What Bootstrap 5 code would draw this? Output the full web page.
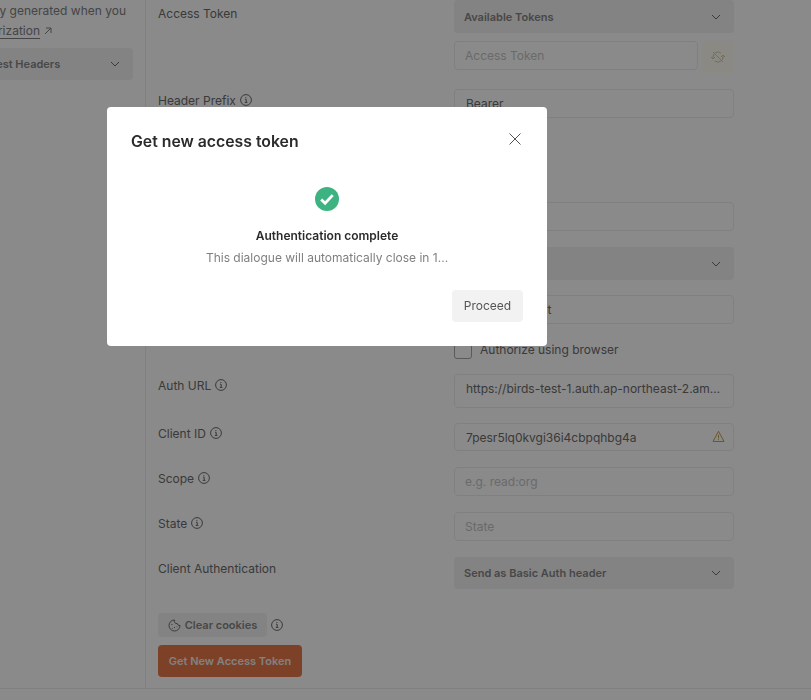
<!DOCTYPE html>
<html lang="en">
<head>
<meta charset="utf-8">
<title>Get new access token</title>
<link href="https://cdn.jsdelivr.net/npm/bootstrap@5.3.0/dist/css/bootstrap.min.css" rel="stylesheet">
<style>
html,body{height:700px;overflow:hidden;background:#fff}
body{font-family:Inter,"Liberation Sans",sans-serif;font-size:12px;line-height:20px;color:#6b6b6b}
.shell{height:689px;border-bottom:1px solid #ededed}
.leftpane{width:146px;border-right:1px solid #ededed;padding-right:12px;overflow:hidden;flex:none}
.cliprow{display:flex;justify-content:flex-end;white-space:nowrap;color:#808080;overflow:hidden;height:20px;padding-top:1px}
.cliprow>*{flex:none}
.leftone{margin-right:7px}
.lefttwo{margin-right:81px;align-items:center;gap:4px}
.lefttwo u{text-underline-offset:3px;text-decoration-thickness:1px}
.selbox{background:#f2f2f2;border-radius:4px;font-weight:600;font-size:11px;color:#858585;display:flex;align-items:center;justify-content:space-between;padding:1px 13px 0 10px;white-space:nowrap}
.selbox svg{flex:none;color:#6b6b6b}
.leftsel{margin-top:8px;height:32px;width:174px;margin-left:-41px;padding-top:0}
.mainpane{padding-left:12px}
.rw{display:flex;width:576px}
.lab{width:296px;flex:none;color:#6b6b6b;display:flex;align-items:flex-start;gap:4px;padding-top:2px}
.lab.lab3{padding-top:4px}
.lab.lab0{padding-top:1px}
.lab svg{margin-top:3px;flex:none}
.ctl{width:280px;flex:none}
.fld{display:block;width:100%;height:29px;border:1px solid #ededed;border-radius:4px;background:#fff;padding:3px 8px 3px 11px;font-size:12px;line-height:21px;color:#6b6b6b;font-family:inherit;white-space:nowrap;overflow:hidden;text-overflow:ellipsis;box-shadow:none}
input.fld{padding-left:10px}
.fld::placeholder{color:#c4c4c4;opacity:1}
.fld.tall{height:34px;padding-top:3px;padding-bottom:7px}
.fld.short{height:28px}
.sel33{height:33px}
.sel32{height:32px;padding-top:0}
.m8{margin-top:8px}.m19{margin-top:19px}.m84{margin-top:84px}.m16{margin-top:16px}.m15{margin-top:15px}.m18{margin-top:18px}
.tokrow{display:flex;gap:4px;height:29px;align-items:flex-start}
.tokrow .fld{width:244px}
.syncbtn{width:32px;height:32px;background:#fffdf2;border-radius:4px;display:flex;align-items:center;justify-content:center;flex:none}
.chk{display:flex;align-items:center;gap:8px;height:16px}
.chkbox{width:18px;height:17px;border:1px solid #a6a6a6;border-radius:3px;background:#fff;flex:none}
.warnwrap{position:relative}
.warnwrap .fld{padding-right:30px}
.warnmark{position:absolute;right:9px;top:7px}
.clearrow{display:flex;align-items:center;gap:4px;margin-top:24px}
.clearbtn{width:109px;height:24px;background:#f2f2f2;border-radius:4px;font-size:11px;font-weight:600;color:#858585;display:flex;align-items:center;justify-content:center;gap:4px;white-space:nowrap}
.getbtn{display:flex;align-items:center;justify-content:center;width:144px;height:32px;margin-top:8px;background:#e8784a;border-radius:4px;font-size:11px;font-weight:600;color:#eee;white-space:nowrap}
.modal-backdrop.show{opacity:.46}
.dlgwrap{width:440px;max-width:none;margin:107px 0 0 107px}
.dlgbox{height:239px;border:0;border-radius:4px;padding:0 24px;color:#2b2b2b;font-size:12px}
.dlghead{height:66px;padding-top:24px;display:flex;justify-content:space-between;align-items:flex-start}
.dlgtitle{font-size:15.8px;font-weight:600;line-height:22px;margin:0;color:#2b2b2b}
.dlgclose{width:14px;height:14px;margin:1px 1px 0 0;padding:0;border:0;background:none;display:flex}
.dlgcheck{display:block;margin:14px auto 0}
.dlgmsg{text-align:center;font-weight:600;margin-top:15px;line-height:20px}
.dlgsub{text-align:center;color:#7f7f7f;margin-top:2px;line-height:20px}
.dlgfoot{display:flex;justify-content:flex-end;margin-top:22px}
.proceedbtn{width:71px;height:32px;background:#f2f2f2;border:0;border-radius:4px;color:#545454;font-size:12px;padding:0}
</style>
</head>
<body>
<svg width="0" height="0" class="d-none">
  <symbol id="ico-info" viewBox="0 0 12 12"><circle cx="6" cy="6" r="5.4" fill="none" stroke="currentColor"/><path d="M5 5.3h1.2v3M4.8 8.4h2.6M5.9 3.1v1" fill="none" stroke="currentColor"/></symbol>
  <symbol id="ico-chev" viewBox="0 0 10 6"><path d="M1 1l4 4 4-4" fill="none" stroke="currentColor"/></symbol>
</svg>
<div class="shell d-flex">
  <aside class="leftpane">
    <div class="cliprow leftone"><span>Tokens are automatically generated when you</span></div>
    <div class="cliprow lefttwo"><u>complete authorization</u><svg width="8" height="8" viewBox="0 0 8 8"><path d="M1 7l6-6M2 1h5v5" fill="none" stroke="#808080"/></svg></div>
    <div class="selbox leftsel"><span>Request Headers</span><svg width="10" height="6"><use href="#ico-chev"/></svg></div>
  </aside>
  <main class="mainpane flex-grow-1">
    <div class="rw">
      <div class="lab lab3"><span>Access Token</span></div>
      <div class="ctl">
        <div class="selbox sel33"><span>Available Tokens</span><svg width="10" height="6"><use href="#ico-chev"/></svg></div>
        <div class="tokrow m8">
          <input class="fld form-control" placeholder="Access Token" aria-label="Access Token">
          <div class="syncbtn"><svg width="16" height="16" viewBox="0 0 16 16" fill="none" stroke="#d5cc9d"><path d="M3 3l10 10M3 10V8a5 5 0 0 1 8-4M13 6v2a5 5 0 0 1-8 4M1 8l2 2 2-2M11 8l2-2 2 2"/></svg></div>
        </div>
      </div>
    </div>
    <div class="rw m19">
      <div class="lab"><span>Header Prefix</span><svg width="12" height="12"><use href="#ico-info"/></svg></div>
      <div class="ctl"><div class="fld">Bearer</div></div>
    </div>
    <div class="rw m84">
      <div class="lab"></div>
      <div class="ctl"><div class="fld"></div></div>
    </div>
    <div class="rw m16">
      <div class="lab"></div>
      <div class="ctl"><div class="selbox sel33"><span></span><svg width="10" height="6"><use href="#ico-chev"/></svg></div></div>
    </div>
    <div class="rw m15">
      <div class="lab"></div>
      <div class="ctl"><div class="fld">http://localhost</div></div>
    </div>
    <div class="rw m18">
      <div class="lab"></div>
      <div class="ctl"><div class="chk"><span class="chkbox"></span><span>Authorize using browser</span></div></div>
    </div>
    <div class="rw m16">
      <div class="lab"><span>Auth URL</span><svg width="12" height="12"><use href="#ico-info"/></svg></div>
      <div class="ctl"><div class="fld tall">https://birds-test-1.auth.ap-northeast-2.amazoncognito.com/login</div></div>
    </div>
    <div class="rw m15">
      <div class="lab lab0"><span>Client ID</span><svg width="12" height="12"><use href="#ico-info"/></svg></div>
      <div class="ctl warnwrap"><div class="fld short">7pesr5lq0kvgi36i4cbpqhbg4a</div>
        <svg class="warnmark" width="13" height="13" viewBox="0 0 13 13" fill="none" stroke="#c9a23f"><path d="M6.5 1.3L12 11.5H1z" stroke-linejoin="round"/><path d="M6.5 4.8v3.6M6.5 9.2v1"/></svg>
      </div>
    </div>
    <div class="rw m16">
      <div class="lab"><span>Scope</span><svg width="12" height="12"><use href="#ico-info"/></svg></div>
      <div class="ctl"><input class="fld form-control" placeholder="e.g. read:org" aria-label="Scope"></div>
    </div>
    <div class="rw m16">
      <div class="lab"><span>State</span><svg width="12" height="12"><use href="#ico-info"/></svg></div>
      <div class="ctl"><input class="fld form-control" placeholder="State" aria-label="State"></div>
    </div>
    <div class="rw m16">
      <div class="lab"><span>Client Authentication</span></div>
      <div class="ctl"><div class="selbox sel32"><span>Send as Basic Auth header</span><svg width="10" height="6"><use href="#ico-chev"/></svg></div></div>
    </div>
    <div class="clearrow">
      <div class="clearbtn"><svg width="13" height="13" viewBox="0 0 13 13" fill="none" stroke="#6b6b6b"><path d="M6.5 1A5.5 5.5 0 1 0 12 6.5 2.4 2.4 0 0 1 9.3 4.6 2.6 2.6 0 0 1 6.5 1z"/><path d="M4 5v1M6.5 8v1M4.5 9v.6M8.8 7.6v.6"/></svg><span>Clear cookies</span></div>
      <svg width="12" height="12"><use href="#ico-info"/></svg>
    </div>
    <div class="getbtn">Get New Access Token</div>
  </main>
</div>

<div class="modal-backdrop show"></div>
<div class="modal d-block" tabindex="-1" role="dialog" aria-modal="true">
  <div class="modal-dialog dlgwrap">
    <div class="modal-content dlgbox">
      <div class="dlghead">
        <h5 class="dlgtitle">Get new access token</h5>
        <button class="dlgclose" type="button" aria-label="Close"><svg width="14" height="14" viewBox="0 0 14 14"><path d="M1.5 1.5l11 11M12.5 1.5l-11 11" stroke="#545454" fill="none"/></svg></button>
      </div>
      <svg class="dlgcheck" width="24" height="24" viewBox="0 0 24 24"><circle cx="12" cy="12" r="12" fill="#3eb382"/><path d="M6.2 12.4l3.9 3.9 7.6-8.2" fill="none" stroke="#fff" stroke-width="2.8"/></svg>
      <div class="dlgmsg">Authentication complete</div>
      <div class="dlgsub">This dialogue will automatically close in 1...</div>
      <div class="dlgfoot"><button class="proceedbtn" type="button">Proceed</button></div>
    </div>
  </div>
</div>
<script src="https://cdn.jsdelivr.net/npm/bootstrap@5.3.0/dist/js/bootstrap.bundle.min.js"></script>
</body>
</html>
